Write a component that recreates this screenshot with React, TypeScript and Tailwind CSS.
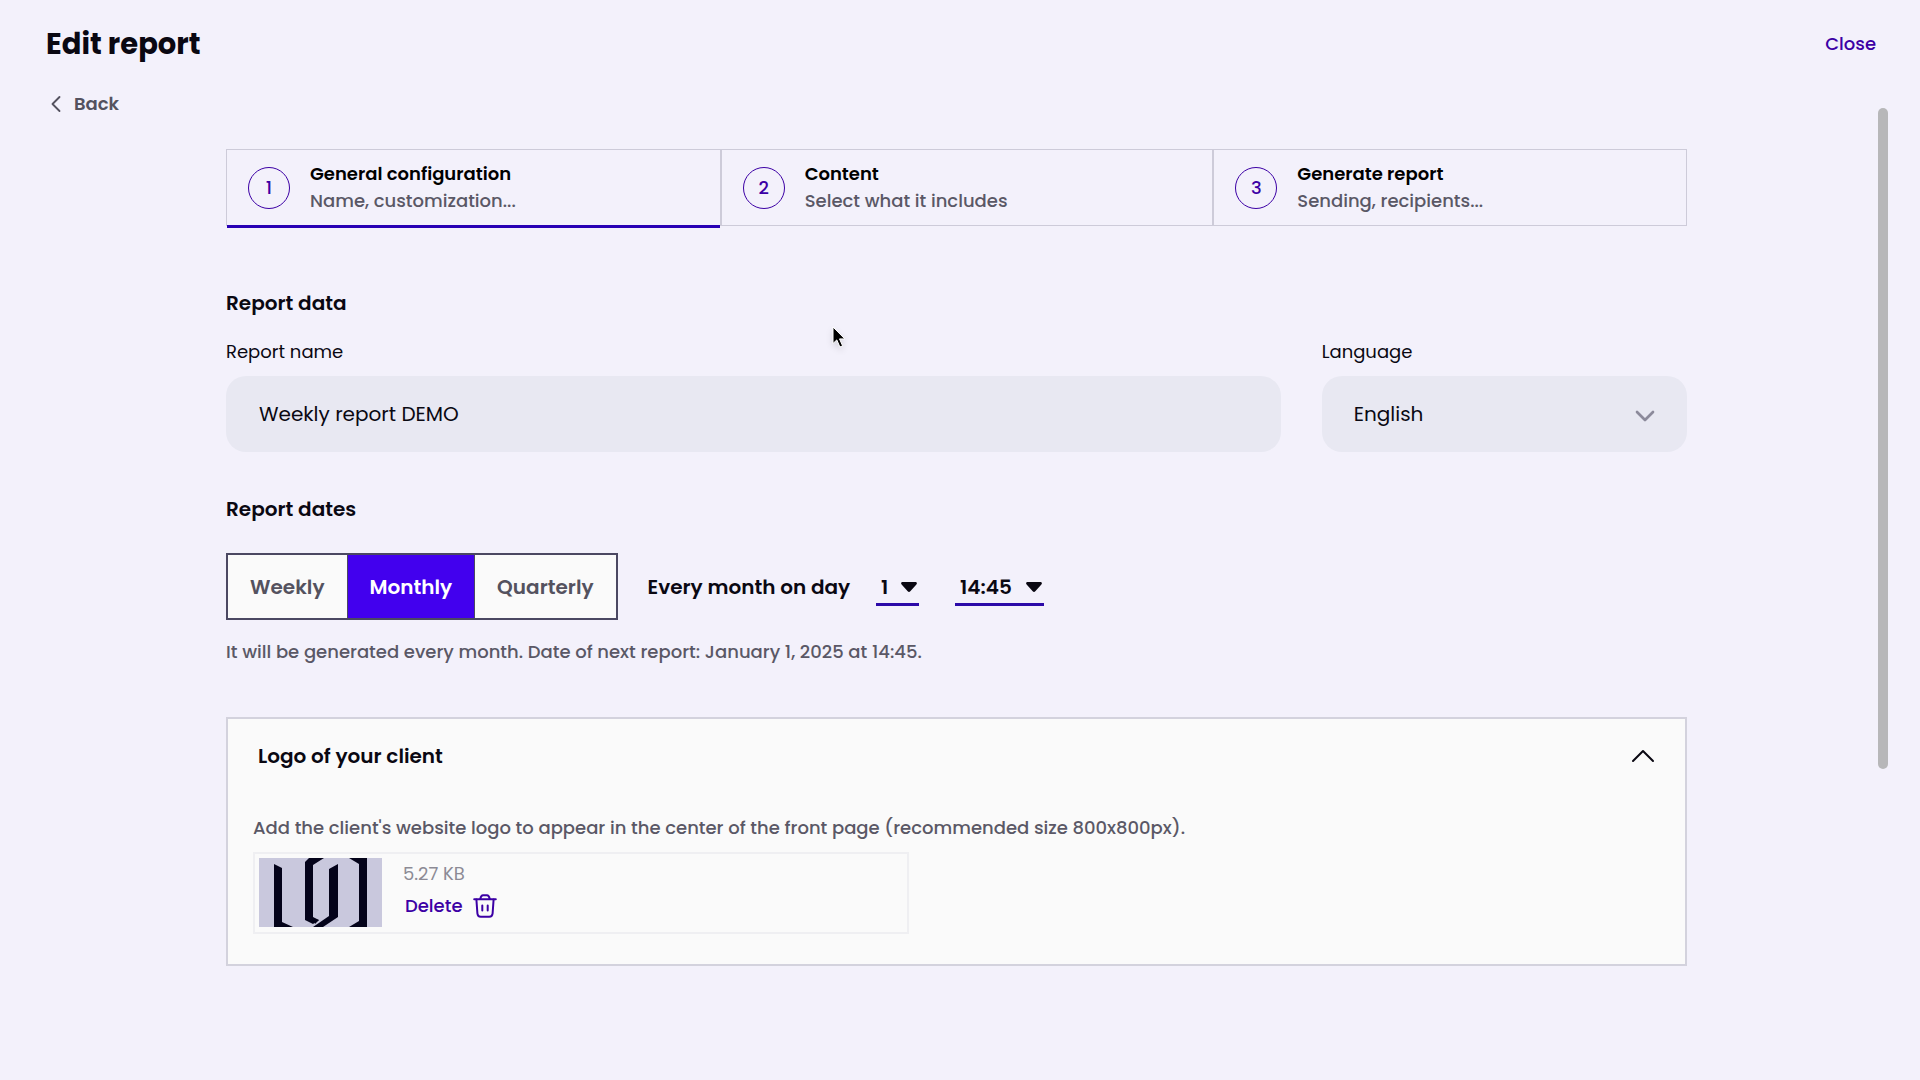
import React, { useState } from 'react';
import { ChevronDown, ChevronLeft, ChevronUp } from 'lucide-react';

interface Step {
  id: number;
  title: string;
  subtitle: string;
}

const steps: Step[] = [
  { id: 1, title: 'General configuration', subtitle: 'Name, customization...' },
  { id: 2, title: 'Content', subtitle: 'Select what it includes' },
  { id: 3, title: 'Generate report', subtitle: 'Sending, recipients...' },
];

const frequencies = ['Weekly', 'Monthly', 'Quarterly'];

const StepTabs: React.FC = () => {
  const [current, setCurrent] = useState(1);

  return (
    <nav className="grid grid-cols-[495fr_493fr_472fr] border border-[#cdcbd9]">
      {steps.map((step) => (
        <button
          key={step.id}
          type="button"
          onClick={() => setCurrent(step.id)}
          className={`relative flex h-[75px] items-center gap-5 pl-[21px] text-left ${
            step.id < steps.length ? 'border-r-2 border-[#cdcbd9]' : ''
          }`}
        >
          <span className="flex h-[42px] w-[42px] shrink-0 items-center justify-center rounded-full border border-[#3c00a5] text-lg font-medium text-[#3c00a5]">
            {step.id}
          </span>
          <span className="flex flex-col pb-0.5">
            <span className="text-lg leading-[27px] font-semibold text-black">{step.title}</span>
            <span className="text-lg leading-[27px] font-medium text-[#5a5866]">{step.subtitle}</span>
          </span>
          {step.id === current && (
            <span className="absolute inset-x-0 -bottom-[3px] h-[3px] bg-[#2800b4]"></span>
          )}
        </button>
      ))}
    </nav>
  );
};

const CaretDown: React.FC = () => (
  <svg
    viewBox="0 0 16 10"
    className="pointer-events-none absolute right-0.5 top-[10px] h-[10px] w-4 fill-[#0a0812]"
    aria-hidden="true"
  >
    <path d="M1.6 0h12.8c1.5 0 2 1.5 1 2.5L9.3 9.3c-.8.9-1.8.9-2.6 0L.6 2.5C-.4 1.5.1 0 1.6 0Z" />
  </svg>
);

const TrashIcon: React.FC = () => (
  <svg
    viewBox="0 0 24 24"
    className="h-6 w-6"
    fill="none"
    stroke="currentColor"
    strokeWidth="2"
    strokeLinecap="round"
    strokeLinejoin="round"
    aria-hidden="true"
  >
    <path d="M1.2 5.3h21.6" />
    <path d="M7.3 5c.4-2.3 1.3-3.8 2.7-3.8h4c1.4 0 2.3 1.5 2.7 3.8" />
    <path d="M3.4 5.5l1 14c.2 2 1.4 3.3 3.3 3.3h8.6c1.9 0 3.1-1.3 3.3-3.3l1-14" />
    <path d="M9.3 11.6v4.8M14.7 11.6v4.8" />
  </svg>
);

const LogoPreview: React.FC = () => (
  <svg viewBox="0 0 123 69" className="h-[69px] w-[123px]" role="img" aria-label="Client logo">
    <rect width="123" height="69" fill="#c9c8dd" />
    <g fill="#04031a">
      <path d="M15 6l8 4v54l11 5H15Z" />
      <path d="M50 0h15L54 7v52l6 3-6 4-8-4V4Z" />
      <path d="M79 6v53l-15 10H54l16-11V11Z" />
      <path d="M54 61l6 1-4 4Z" />
      <path d="M90 0h18v69H90l10-6V6Z" />
    </g>
  </svg>
);

const App: React.FC = () => {
  const [frequency, setFrequency] = useState('Monthly');
  const [open, setOpen] = useState(true);

  return (
    <div className="relative min-h-screen bg-[#f3f1fb] font-['Poppins','Inter',sans-serif] text-[#0a0812]">
      <header className="flex items-center justify-between pl-[46px] pr-11 pt-6">
        <h1 className="text-[29px] leading-[40px] font-bold">Edit report</h1>
        <button type="button" className="text-lg font-medium text-[#3c00a5]">
          Close
        </button>
      </header>

      <button type="button" className="ml-[42px] mt-[26px] flex items-center gap-1 text-lg font-semibold text-[#54525f]">
        <ChevronLeft className="h-7 w-7" strokeWidth={1.6} />
        Back
      </button>

      <main className="pl-[46px] pr-[53px]">
        <div className="mx-auto mt-[31px] max-w-[1461px] pb-24">
          <StepTabs />

          <section>
            <h2 className="mt-[62px] text-xl leading-[30px] font-semibold">Report data</h2>
            <div className="mt-5 grid grid-cols-[1054fr_365fr] gap-[41px]">
              <div className="flex flex-col gap-[10px]">
                <label htmlFor="report-name" className="text-lg leading-[28px]">
                  Report name
                </label>
                <input
                  id="report-name"
                  type="text"
                  defaultValue="Weekly report DEMO"
                  className="h-[76px] rounded-[20px] bg-[#e8e8f2] px-[33px] text-xl outline-none"
                />
              </div>
              <div className="flex flex-col gap-[10px]">
                <label htmlFor="language" className="text-lg leading-[28px]">
                  Language
                </label>
                <div className="relative">
                  <select
                    id="language"
                    className="h-[76px] w-full appearance-none rounded-[20px] bg-[#e8e8f2] px-8 text-xl outline-none"
                  >
                    <option>English</option>
                  </select>
                  <ChevronDown
                    className="pointer-events-none absolute right-[26px] top-6 h-8 w-8 text-[#8c8a9b]"
                    strokeWidth={2}
                  />
                </div>
              </div>
            </div>
          </section>

          <section>
            <h2 className="mt-[42px] text-xl leading-[30px] font-semibold">Report dates</h2>
            <div className="mt-[29px] flex items-center">
              <div className="flex border-2 border-[#4b4862]">
                {frequencies.map((item) => (
                  <button
                    key={item}
                    type="button"
                    aria-pressed={item === frequency}
                    onClick={() => setFrequency(item)}
                    className={`h-[63px] border-[#4b4862] px-[22px] text-xl font-semibold not-first:border-l ${
                      item === frequency ? 'bg-[#4200ee] text-white' : 'bg-[#fafafa] text-[#54525f]'
                    }`}
                  >
                    {item}
                  </button>
                ))}
              </div>
              <label htmlFor="day" className="ml-[30px] text-xl font-semibold">
                Every month on day
              </label>
              <div className="relative ml-[26px] mt-1">
                <select
                  id="day"
                  className="block h-[34px] w-[43px] appearance-none border-b-[3px] border-[#2c0aa8] pl-[5px] text-xl leading-[30px] font-semibold outline-none"
                >
                  <option>1</option>
                </select>
                <CaretDown />
              </div>
              <div className="relative ml-9 mt-1">
                <select
                  aria-label="Time"
                  className="block h-[34px] w-[89px] appearance-none border-b-[3px] border-[#2c0aa8] pl-[5px] text-xl leading-[30px] font-semibold outline-none"
                >
                  <option>14:45</option>
                </select>
                <CaretDown />
              </div>
            </div>
            <p className="mt-[18px] text-lg leading-[28px] font-medium text-[#5a5866]">
              It will be generated every month. Date of next report: January 1, 2025 at 14:45.
            </p>
          </section>

          <section className="mt-[51px] border-2 border-[#d3d2dd] bg-[#fafafa]">
            <button
              type="button"
              aria-expanded={open}
              onClick={() => setOpen(!open)}
              className="flex h-[74px] w-full items-center justify-between pl-[30px] pr-[22px] text-xl font-semibold"
            >
              Logo of your client
              <ChevronUp className="h-10 w-10" strokeWidth={1.2} />
            </button>
            {open && (
              <div className="px-[25px] pb-[30px] pt-[21px]">
                <p className="text-lg leading-[28px] font-medium text-[#5a5866]">
                  Add the client's website logo to appear in the center of the front page (recommended size 800x800px).
                </p>
                <div className="mt-[10px] flex max-w-[656px] items-center gap-[21px] border-2 border-[#efeff2] px-1 pb-[5px] pt-1">
                  <LogoPreview />
                  <div className="flex flex-col items-start gap-1 pb-[6px]">
                    <span className="text-lg leading-[28px] text-[#8c8a95]">5.27 KB</span>
                    <button
                      type="button"
                      className="flex items-center gap-2.5 pl-0.5 text-lg leading-[28px] font-medium text-[#3c00a5]"
                    >
                      Delete
                      <TrashIcon />
                    </button>
                  </div>
                </div>
              </div>
            )}
          </section>
        </div>
      </main>

      {/* scroll thumb */}
      <div className="absolute right-8 top-[108px] h-[661px] w-[10px] rounded-full bg-[#b7b7b9]"></div>

      {/* pointer */}
      <svg
        viewBox="0 0 14 22"
        className="absolute left-[832px] top-[326px] h-[22px] w-[14px] drop-shadow-md"
        aria-hidden="true"
      >
        <path d="M1 1v16.500l3.800-3.600 3.100 7.100 2.700-1.200-3.100-6.900h5.300Z" fill="#000" stroke="#fff" strokeWidth="1" />
      </svg>
    </div>
  );
};

export default App;
